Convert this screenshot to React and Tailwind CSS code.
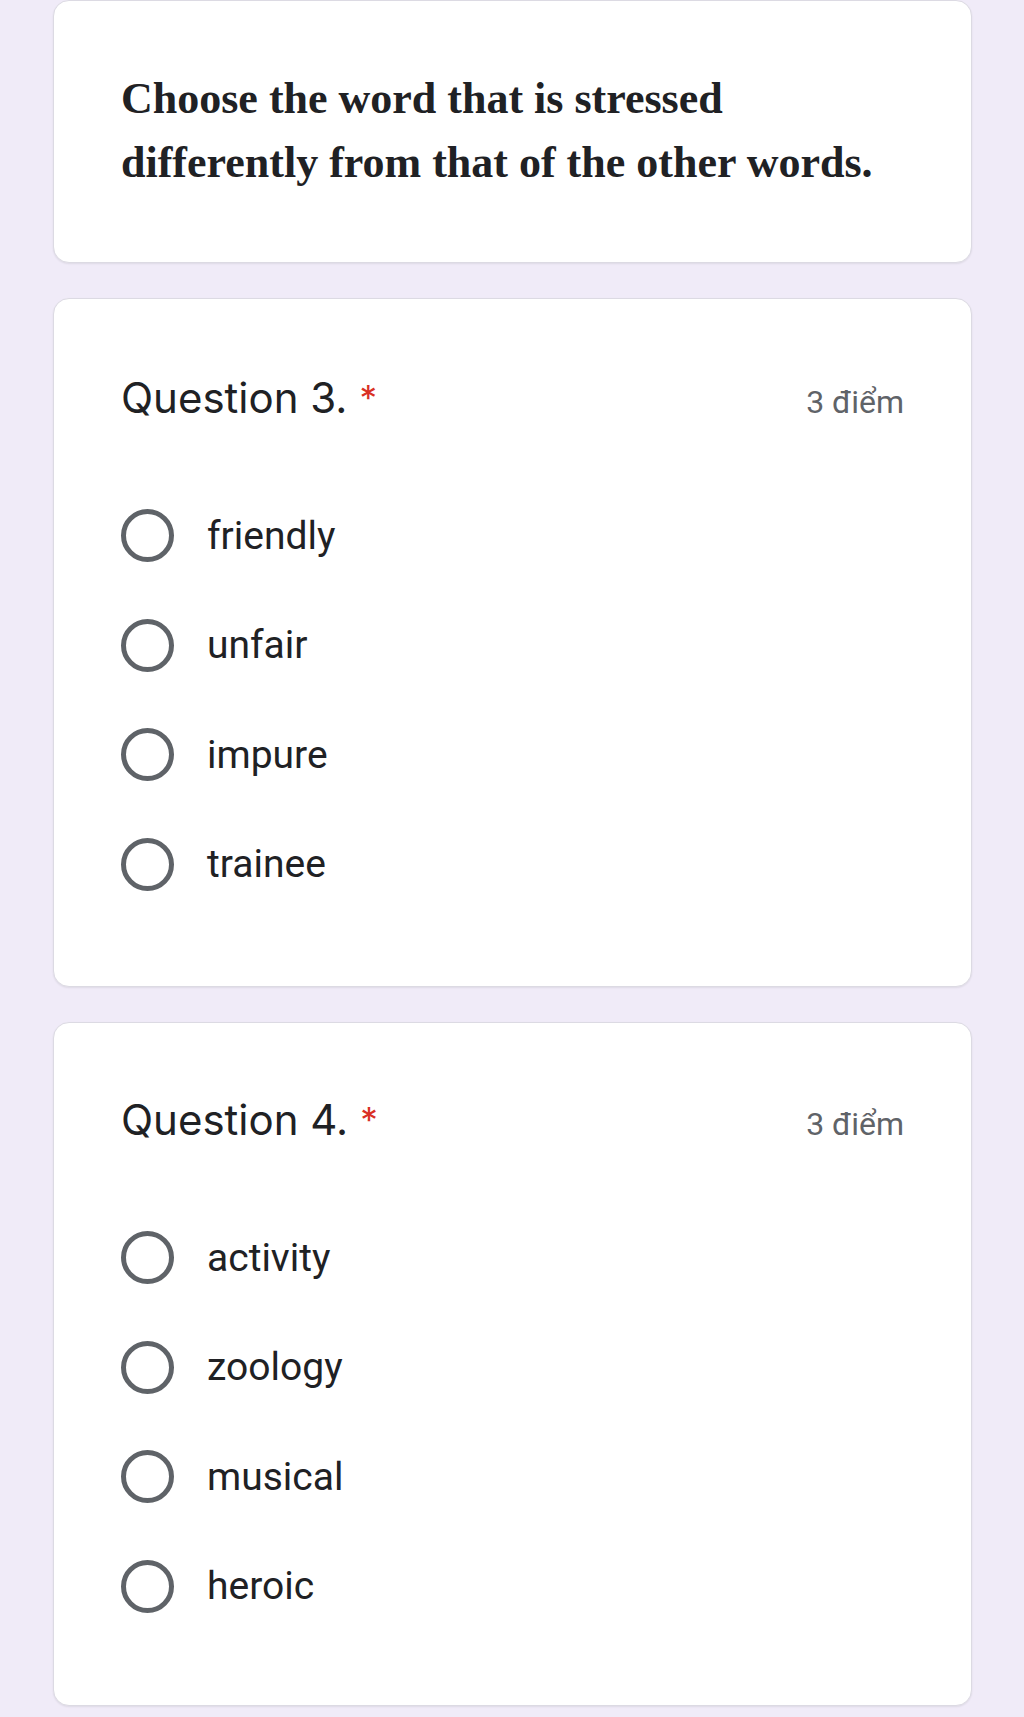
import React from 'react';

const questions = [
  { id: 3, title: 'Question 3.', points: '3 điểm', options: ['friendly', 'unfair', 'impure', 'trainee'], pad: 'pt-[74px] pb-[67px]' },
  { id: 4, title: 'Question 4.', points: '3 điểm', options: ['activity', 'zoology', 'musical', 'heroic'], pad: 'pt-[72px] pb-[64px]' },
];

const Card = ({ children, className = '' }) => (
  <div className={`bg-white rounded-[16px] border border-[#dcdae3] shadow-[0_1px_2px_rgba(0,0,0,0.08)] ${className}`}>
    {children}
  </div>
);

const Option = ({ label }) => (
  <label className="flex items-center h-[109.5px] cursor-pointer">
    <span className="w-[53px] h-[53px] rounded-full border-[5px] border-[#5f6368] shrink-0" />
    <span className="ml-[33px] text-[39px] text-[#202124] font-['Roboto',sans-serif]">{label}</span>
  </label>
);

const Question = ({ q }) => (
  <Card className={`pl-[67px] pr-[67px] ${q.pad}`}>
    <div className="flex items-baseline justify-between h-[50px] leading-[50px]">
      <div className="text-[42px] text-[#202124] font-['Inter',sans-serif]">
        {q.title}
        <span className="ml-[12px] text-[35px] text-[#d93025] align-top">*</span>
      </div>
      <div className="text-[32px] text-[#5f6368] font-['Roboto',sans-serif]">{q.points}</div>
    </div>
    <div className="mt-[58px] flex flex-col">
      {q.options.map((opt) => (
        <Option key={opt} label={opt} />
      ))}
    </div>
  </Card>
);

export default function App() {
  return (
    <div className="min-h-screen bg-[#f0ebf8] pl-[53px] pr-[52px] pb-[8px] flex flex-col gap-[35px]">
      <Card className="pl-[67px] pr-[30px] pt-[66px] pb-[67px]">
        <p className="text-[44px] leading-[64px] font-bold text-[#202124] font-['Liberation_Serif',serif]">
          Choose the word that is stressed
          <br />
          differently from that of the other words.
        </p>
      </Card>
      {questions.map((q) => (
        <Question key={q.id} q={q} />
      ))}
    </div>
  );
}
